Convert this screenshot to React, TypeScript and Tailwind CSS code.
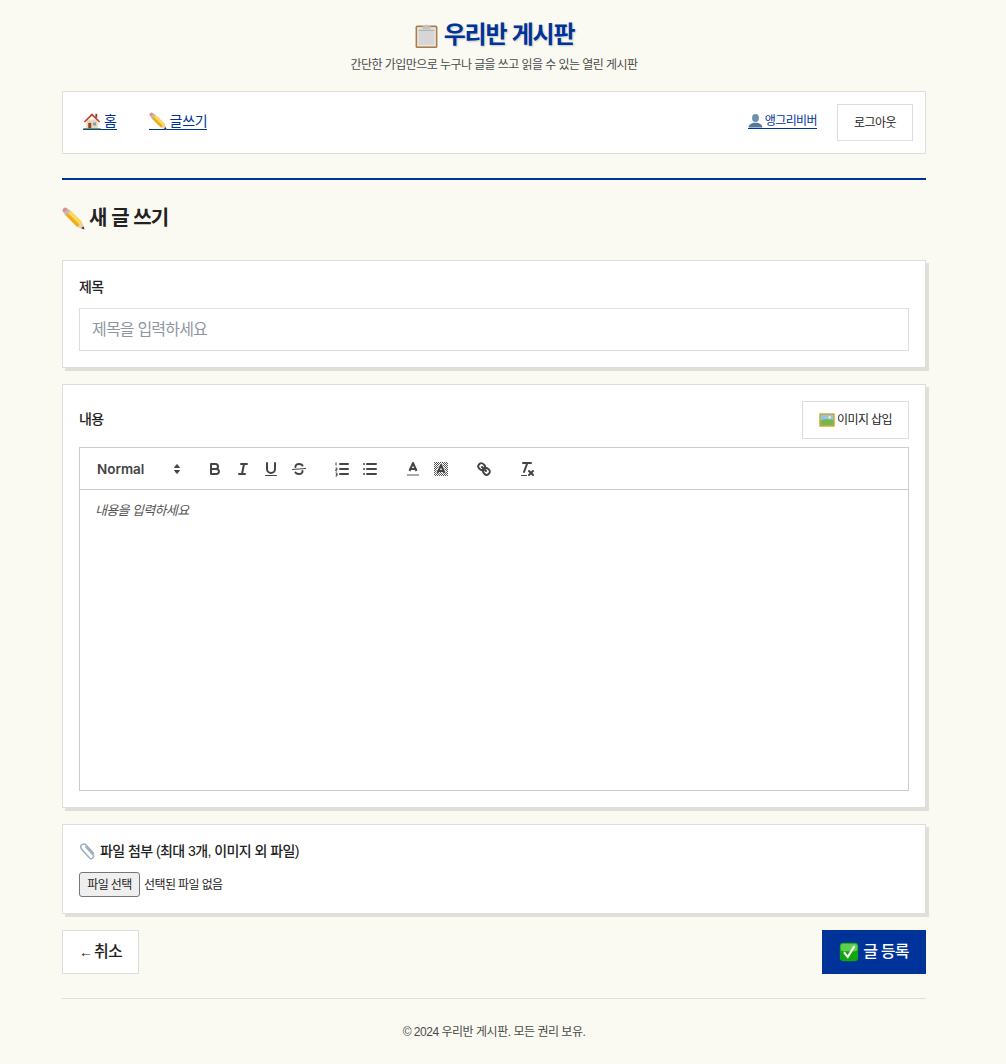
function ClipboardEmoji({ className }: { className?: string }) {
  return (
    <svg viewBox="0 0 24 24" className={className}>
      <rect x="1.500" y="2.500" width="21" height="21.500" rx="1.500" fill="#ab7c48" />
      <rect x="3" y="4" width="18" height="18.500" fill="#e6e6e4" />
      <rect x="4.500" y="6.500" width="15" height="14.500" fill="#d6d6d4" />
      <rect x="4.500" y="6.500" width="15" height="1" fill="#a9a9a7" />
      <path d="M8 3h2.500a1.500 1.500 0 0 1 3 0H16v3H8z" fill="#c4c4c2" />
    </svg>
  );
}

function HouseEmoji({ className }: { className?: string }) {
  return (
    <svg viewBox="0 0 24 24" className={className}>
      <rect x="4.500" y="10" width="15" height="12" fill="#ecd9b4" />
      <path d="M1 12.500 12 1.500l11 11-1.500 1.500L12 5 2.500 14z" fill="#b9443a" />
      <rect x="16.500" y="2.500" width="2.500" height="5" fill="#9c3a30" />
      <rect x="7" y="14.500" width="4" height="7.500" fill="#8a4b2c" />
      <rect x="13.500" y="14" width="4" height="4" fill="#6f9fc4" />
      <rect x="0.500" y="21.500" width="23" height="1.500" fill="#5f9148" />
    </svg>
  );
}

function PencilEmoji({ className }: { className?: string }) {
  return (
    <svg viewBox="0 0 24 24" className={className}>
      <path d="M7.500 2.500 21 16l-5 5L2.500 7.500z" fill="#f0ad1c" />
      <path d="M7.500 2.500 21 16l-2.500 2.500L5 5z" fill="#fcd85c" />
      <path d="m21 16 2.500 7.500L16 21z" fill="#eccfa5" />
      <path d="m22.300 20 1.200 3.500-3.500-1.200z" fill="#333" />
      <path d="M1.500 1.500a3 3 0 0 1 4 0l1 1-4 4-1-1a3 3 0 0 1 0-4z" fill="#e58b8f" />
      <path d="m6 2 2.500 2.500-4 4L2 6z" fill="#b9bcc2" />
    </svg>
  );
}

function UserEmoji({ className }: { className?: string }) {
  return (
    <svg viewBox="0 0 24 24" className={className}>
      <ellipse cx="12" cy="8" rx="5.500" ry="6.500" fill="#6b90ae" />
      <path d="M1 23c0-5 5-6.500 8-7.500h6c3 1 8 2.500 8 7.500z" fill="#54789a" />
    </svg>
  );
}

function PictureEmoji({ className }: { className?: string }) {
  return (
    <svg viewBox="0 0 24 24" className={className}>
      <rect x="0.500" y="2" width="23" height="20" fill="#d4a017" />
      <rect x="2.500" y="4" width="19" height="16" fill="#8fc6ea" />
      <path d="M2.500 13c5-2.500 11-2.500 19-1v8h-19z" fill="#79b547" />
      <circle cx="16" cy="8" r="2" fill="#f6ecb0" />
    </svg>
  );
}

function ClipEmoji({ className }: { className?: string }) {
  return (
    <svg viewBox="0 0 24 24" fill="none" stroke="#9fb0c0" strokeWidth="2" strokeLinecap="round" className={className}>
      <path d="M9 6.500 18.500 17a3 3 0 0 1-4.500 4.200L3.500 9.500a4 4 0 0 1 6-5.500l10 11" />
    </svg>
  );
}

function CheckEmoji({ className }: { className?: string }) {
  return (
    <svg viewBox="0 0 24 24" className={className}>
      <rect x="1" y="1" width="22" height="22" rx="4" fill="#12a50f" />
      <rect x="2" y="2" width="20" height="9" rx="3" fill="#5fcf52" />
      <path d="m6 12 4.500 6L18.500 5" fill="none" stroke="#fff" strokeWidth="2.500" />
    </svg>
  );
}

function QuillIcon({ children }: { children: React.ReactNode }) {
  return (
    <svg viewBox="0 0 18 18" fill="none" stroke="#444" strokeWidth="2" strokeLinecap="round" strokeLinejoin="round" className="h-[18px] w-[18px]">
      {children}
    </svg>
  );
}

function Toolbar() {
  return (
    <div className="flex h-[42px] items-center border-b border-[#ccc] pl-[17px]">
      <div className="flex w-[89px] items-center justify-between text-[13.5px] font-semibold text-[#444]">
        <span className="pt-[1px] font-['Inter',sans-serif]">Normal</span>
        <svg viewBox="0 0 18 18" className="h-[18px] w-[18px]" fill="#444" stroke="#444" strokeLinejoin="round">
          <polygon points="6.500 10.500 9 13.500 11.500 10.500" />
          <polygon points="6.500 7.500 9 4.500 11.500 7.500" />
        </svg>
      </div>
      <div className="ml-[20px] flex gap-[10px]">
        <QuillIcon>
          <path d="M5,4H9.500A2.500,2.500,0,0,1,12,6.500v0A2.500,2.500,0,0,1,9.500,9H5V4Z" />
          <path d="M5,9h5.500A2.500,2.500,0,0,1,13,11.500v0A2.500,2.500,0,0,1,10.500,14H5V9Z" />
        </QuillIcon>
        <QuillIcon>
          <line x1="7" x2="13" y1="4" y2="4" />
          <line x1="5" x2="11" y1="14" y2="14" />
          <line x1="8" x2="10" y1="14" y2="4" />
        </QuillIcon>
        <QuillIcon>
          <path d="M5,3V9a4,4,0,0,0,4,4H9a4,4,0,0,0,4-4V3" />
          <rect x="3" y="15" width="12" height="1" rx=".5" fill="#444" stroke="none" />
        </QuillIcon>
        <QuillIcon>
          <line x1="15.500" x2="2.500" y1="8.500" y2="9.500" strokeWidth="1" />
          <path d="M12.500 5.500C12 4.500 10.500 4 9 4 7 4 5.200 5 5.500 7M5.500 12.500C6 13.500 7.500 14 9 14c2 0 3.800-1 3.500-3" />
        </QuillIcon>
      </div>
      <div className="ml-[25px] flex gap-[10px]">
        <QuillIcon>
          <line x1="7" x2="15" y1="4" y2="4" />
          <line x1="7" x2="15" y1="9" y2="9" />
          <line x1="7" x2="15" y1="14" y2="14" />
          <path d="M3 2.500v3M2.500 8h1.500v1.500H2.800V11H4M2.500 13h1.500v3H2.500M3 14.500h1" strokeWidth="1" strokeLinecap="butt" strokeLinejoin="miter" />
        </QuillIcon>
        <QuillIcon>
          <line x1="6" x2="15" y1="4" y2="4" />
          <line x1="6" x2="15" y1="9" y2="9" />
          <line x1="6" x2="15" y1="14" y2="14" />
          <line x1="3" x2="3" y1="4" y2="4" />
          <line x1="3" x2="3" y1="9" y2="9" />
          <line x1="3" x2="3" y1="14" y2="14" />
        </QuillIcon>
      </div>
      <div className="ml-[25px] flex gap-[10px]">
        <QuillIcon>
          <line x1="3" x2="15" y1="15" y2="15" stroke="#aaa" strokeLinecap="butt" />
          <polyline points="5.500 11 9 3 12.500 11" strokeLinecap="butt" />
          <line x1="11.600" x2="6.400" y1="9" y2="9" />
        </QuillIcon>
        <QuillIcon>
          <defs>
            <pattern id="hatch" width="2" height="2" patternUnits="userSpaceOnUse">
              <rect width="1" height="1" fill="#555" stroke="none" />
              <rect x="1" y="1" width="1" height="1" fill="#555" stroke="none" />
            </pattern>
          </defs>
          <rect x="2" y="2" width="14" height="14" fill="url(#hatch)" stroke="none" />
          <polyline points="5.500 13 9 5 12.500 13" stroke="#fff" strokeWidth="3.500" strokeLinecap="butt" />
          <polyline points="5.500 13 9 5 12.500 13" strokeLinecap="butt" />
          <line x1="11.600" x2="6.400" y1="11" y2="11" />
        </QuillIcon>
      </div>
      <div className="ml-[25px] flex">
        <QuillIcon>
          <line x1="7" x2="11" y1="7" y2="11" />
          <path d="M8.900,4.577a3.476,3.476,0,0,1,.36,4.679A3.476,3.476,0,0,1,4.577,8.900C3.185,7.500,2.035,6.400,4.217,4.217S7.500,3.185,8.900,4.577Z" />
          <path d="M13.423,9.100a3.476,3.476,0,0,0-4.679-.36,3.476,3.476,0,0,0,.36,4.679c1.392,1.392,2.500,2.542,4.679.36S14.815,10.500,13.423,9.100Z" />
        </QuillIcon>
      </div>
      <div className="ml-[25px] flex">
        <QuillIcon>
          <line x1="5" x2="13" y1="3" y2="3" />
          <line x1="6" x2="9.350" y1="12" y2="3" />
          <line x1="11" x2="15" y1="11" y2="15" />
          <line x1="15" x2="11" y1="11" y2="15" />
          <rect x="3" y="15" width="6" height="1" rx=".5" fill="#444" stroke="none" />
        </QuillIcon>
      </div>
    </div>
  );
}

export default function App() {
  return (
    <div className="min-h-[1064px] bg-[#fafaf2] font-['Liberation_Sans','Noto_Sans_CJK_KR',sans-serif] text-[#222]">
      <div className="ml-[62px] w-[864px] pt-[19px]">
        <header className="text-center">
          <h1 className="flex h-[32px] items-center justify-center gap-[5px] text-2xl font-bold tracking-[-0.05em] text-[#003399] [text-shadow:1px_1px_2px_rgba(0,0,0,0.2)]">
            <ClipboardEmoji className="h-[25px] w-[25px]" />
            우리반 게시판
          </h1>
          <p className="mt-[5px] text-xs leading-[18px] tracking-[-0.047em] text-[#4b4b4b]">간단한 가입만으로 누구나 글을 쓰고 읽을 수 있는 열린 게시판</p>
        </header>

        <nav className="mt-[17px] flex h-[63px] items-center justify-between border border-[#ddd] bg-white pr-3 pl-5">
          <div className="mb-[3px] flex items-center gap-8 text-sm tracking-[-0.02em] text-[#003399]">
            <a href="#" className="flex h-[18px] items-center gap-[3px] border-b border-[#003399]">
              <HouseEmoji className="h-[18px] w-[18px]" />홈
            </a>
            <a href="#" className="flex h-[18px] items-center gap-[3px] border-b border-[#003399]">
              <PencilEmoji className="h-[18px] w-[18px]" />글쓰기
            </a>
          </div>
          <div className="flex items-center gap-5">
            <a href="#" className="mb-[3px] flex h-[16px] items-center gap-[2px] border-b border-[#003399] text-xs tracking-[-0.05em] text-[#003399]">
              <UserEmoji className="h-[15px] w-[15px]" />앵그리비버
            </a>
            <button type="button" className="h-[37px] w-[76px] border border-[#ddd] bg-white text-xs tracking-[-0.05em] text-[#222]">
              로그아웃
            </button>
          </div>
        </nav>

        <div className="mt-6 border-t-2 border-[#003399]" />

        <h2 className="mt-[24px] flex h-[28px] items-center gap-1 text-xl font-bold tracking-[-0.045em] text-[#222]">
          <PencilEmoji className="h-[23px] w-[23px]" />새 글 쓰기
        </h2>

        <form className="mt-[28px]">
          <section className="border border-[#ddd] bg-white p-4 shadow-[3px_3px_0_#e0e0d8]">
            <label className="block text-sm font-medium leading-5 tracking-[-0.05em]">제목</label>
            <input
              type="text"
              placeholder="제목을 입력하세요"
              className="mt-[11px] block h-[43px] w-full border border-[#ddd] px-3 text-base tracking-[-0.05em] outline-none placeholder:text-[#8f96a3]"
            />
          </section>

          <section className="mt-[16px] border border-[#ddd] bg-white p-4 shadow-[3px_3px_0_#e0e0d8]">
            <div className="flex items-center justify-between">
              <label className="pb-[2px] text-sm font-medium leading-5 tracking-[-0.05em]">내용</label>
              <button type="button" className="flex h-[38px] w-[107px] items-center justify-center gap-[2px] border border-[#ddd] bg-white pb-[1px] text-xs tracking-[-0.05em]">
                <PictureEmoji className="h-4 w-4" />이미지 삽입
              </button>
            </div>
            <div className="mt-2 border border-[#ccc]">
              <Toolbar />
              <div className="h-[300px] px-[15px] py-3 text-[13px] italic leading-[18px] tracking-[-0.05em] text-[#555]">내용을 입력하세요</div>
            </div>
          </section>

          <section className="mt-[16px] border border-[#ddd] bg-white p-4 shadow-[3px_3px_0_#e0e0d8]">
            <label className="flex items-center gap-[3px] text-sm font-medium leading-5 tracking-[-0.04em]">
              <ClipEmoji className="h-[18px] w-[18px]" />파일 첨부 (최대 3개, 이미지 외 파일)
            </label>
            <div className="mt-[11px] flex items-center gap-1 text-xs tracking-[-0.05em]">
              <button type="button" className="h-[25px] w-[61px] rounded-[3px] border border-[#767676] bg-[#efefef] text-xs tracking-[-0.05em]">
                파일 선택
              </button>
              선택된 파일 없음
            </div>
          </section>

          <div className="mt-[16px] flex items-center justify-between">
            <button type="button" className="flex h-[44px] w-[77px] items-center gap-[3px] border border-[#ddd] bg-white pl-4 text-base font-medium tracking-[-0.05em] text-[#222]">
              <span className="w-[12px] text-sm font-normal">←</span>취소
            </button>
            <button type="submit" className="flex h-[44px] w-[104px] items-center justify-center gap-1 bg-[#003399] text-base font-medium tracking-[-0.05em] text-white">
              <CheckEmoji className="h-5 w-5" />글 등록
            </button>
          </div>
        </form>

        <footer className="mt-6 border-t border-[#ddd] pt-6 text-center text-xs leading-[18px] tracking-[-0.04em] text-[#4b4b4b]">
          © 2024 우리반 게시판. 모든 권리 보유.
        </footer>
      </div>
    </div>
  );
}
